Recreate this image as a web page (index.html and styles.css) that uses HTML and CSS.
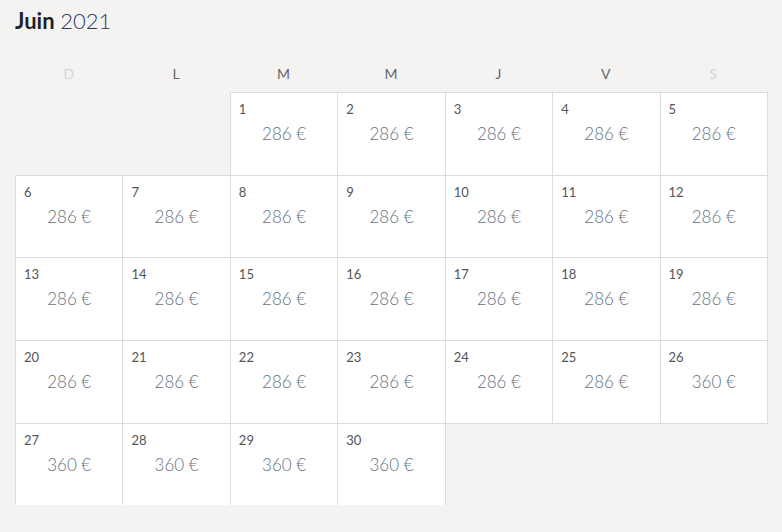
FILE: index.html
```html
<!DOCTYPE html>
<html lang="fr">
<head>
<meta charset="utf-8">
<link rel="stylesheet" href="styles.css">
</head>
<body>
<div class="cal">
  <h1 class="title"><b>Juin</b> <span class="year">2021</span></h1>
  <div class="weekdays">
    <div class="wd off">D</div><div class="wd">L</div><div class="wd">M</div><div class="wd">M</div><div class="wd">J</div><div class="wd">V</div><div class="wd off">S</div>
  </div>
  <div class="grid">
    <div class="empty"></div><div class="empty"></div>
    <div class="day"><span class="n">1</span><span class="p">286 €</span></div>
    <div class="day"><span class="n">2</span><span class="p">286 €</span></div>
    <div class="day"><span class="n">3</span><span class="p">286 €</span></div>
    <div class="day"><span class="n">4</span><span class="p">286 €</span></div>
    <div class="day"><span class="n">5</span><span class="p">286 €</span></div>
    <div class="day"><span class="n">6</span><span class="p">286 €</span></div>
    <div class="day"><span class="n">7</span><span class="p">286 €</span></div>
    <div class="day"><span class="n">8</span><span class="p">286 €</span></div>
    <div class="day"><span class="n">9</span><span class="p">286 €</span></div>
    <div class="day"><span class="n">10</span><span class="p">286 €</span></div>
    <div class="day"><span class="n">11</span><span class="p">286 €</span></div>
    <div class="day"><span class="n">12</span><span class="p">286 €</span></div>
    <div class="day"><span class="n">13</span><span class="p">286 €</span></div>
    <div class="day"><span class="n">14</span><span class="p">286 €</span></div>
    <div class="day"><span class="n">15</span><span class="p">286 €</span></div>
    <div class="day"><span class="n">16</span><span class="p">286 €</span></div>
    <div class="day"><span class="n">17</span><span class="p">286 €</span></div>
    <div class="day"><span class="n">18</span><span class="p">286 €</span></div>
    <div class="day"><span class="n">19</span><span class="p">286 €</span></div>
    <div class="day"><span class="n">20</span><span class="p">286 €</span></div>
    <div class="day"><span class="n">21</span><span class="p">286 €</span></div>
    <div class="day"><span class="n">22</span><span class="p">286 €</span></div>
    <div class="day"><span class="n">23</span><span class="p">286 €</span></div>
    <div class="day"><span class="n">24</span><span class="p">286 €</span></div>
    <div class="day"><span class="n">25</span><span class="p">286 €</span></div>
    <div class="day"><span class="n">26</span><span class="p">360 €</span></div>
    <div class="day"><span class="n">27</span><span class="p">360 €</span></div>
    <div class="day"><span class="n">28</span><span class="p">360 €</span></div>
    <div class="day"><span class="n">29</span><span class="p">360 €</span></div>
    <div class="day"><span class="n">30</span><span class="p">360 €</span></div>
  </div>
</div>
</body>
</html>
```
FILE: styles.css
```css
html, body {
  margin: 0;
  background: #f4f3f2;
  font-family: Lato, "Open Sans", sans-serif;
}
.cal {
  padding: 8px 0 0 15px;
  width: 752px;
}
.title {
  margin: 0;
  font-size: 22px;
  line-height: 26px;
  font-weight: 400;
  color: #222;
}
.title b {
  font-weight: 700;
  color: #1f1f2a;
}
.year {
  font-weight: 300;
  color: #2d3b5e;
}
.weekdays {
  display: grid;
  grid-template-columns: repeat(7, 1fr);
  margin-top: 22px;
  height: 36px;
  align-items: center;
}
.wd {
  text-align: center;
  font-size: 14px;
  color: #666;
  padding-bottom: 2px;
}
.wd.off {
  color: #d4d4d4;
}
.grid {
  display: grid;
  grid-template-columns: repeat(7, 1fr);
  grid-auto-rows: 82.7px;
}
.day {
  background: #fff;
  border: 1px solid #dcdcdc;
  margin: 0 -1px -1px 0;
  display: flex;
  flex-direction: column;
  padding: 8px 0 0 8px;
}
.n {
  font-size: 13px;
  line-height: 16px;
  color: #555;
}
.p {
  margin-top: 7px;
  text-align: center;
  padding-right: 8px;
  font-size: 17px;
  line-height: 20px;
  font-weight: 300;
  color: #66727f;
}
```
